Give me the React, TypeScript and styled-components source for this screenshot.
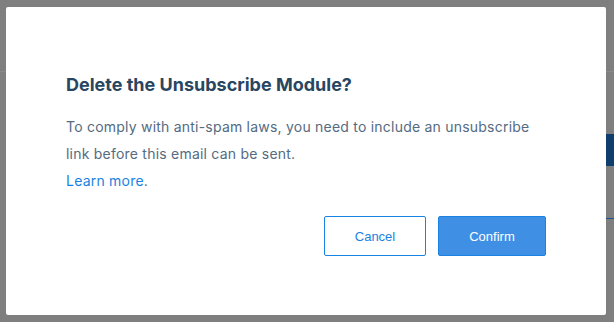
import React from "react";
import styled, { createGlobalStyle } from "styled-components";

const Global = createGlobalStyle`
  html, body { margin: 0; padding: 0; }
  body { background: #7f7f7f; width: 614px; height: 322px; overflow: hidden; }
`;

const Backdrop = styled.div`
  position: relative;
  width: 614px;
  height: 322px;
  background: #7f7f7f;
  padding: 7px 8px 7px 6px;
  box-sizing: border-box;
`;

const Stripe = styled.div<{ $top: number; $h: number; $color: string; $left?: number }>`
  position: absolute;
  top: ${(p) => p.$top}px;
  left: ${(p) => p.$left ?? 606}px;
  right: 0;
  height: ${(p) => p.$h}px;
  background: ${(p) => p.$color};
`;

const Modal = styled.div`
  position: relative;
  width: 600px;
  height: 308px;
  background: #fff;
  border-radius: 2px;
  box-sizing: border-box;
  padding: 66px 60px 0 60px;
  display: flex;
  flex-direction: column;
`;

const Title = styled.h2`
  margin: 0 0 16px;
  font-family: "Inter", "Liberation Sans", sans-serif;
  font-weight: 700;
  font-size: 18px;
  line-height: 24px;
  color: #294661;
  letter-spacing: 0;
`;

const Body = styled.p`
  margin: 0;
  font-family: "Inter", "Liberation Sans", sans-serif;
  font-size: 14px;
  line-height: 27px;
  color: #546b81;
  letter-spacing: 0.22px;
`;

const Link = styled.a`
  color: #1a82e2;
  text-decoration: none;
`;

const Actions = styled.div`
  display: flex;
  justify-content: flex-end;
  gap: 12px;
  margin-top: 22px;
`;

const Button = styled.button<{ $primary?: boolean }>`
  height: 40px;
  width: ${(p) => (p.$primary ? 108 : 102)}px;
  border-radius: 2px;
  border: 1px solid #1a82e2;
  background: ${(p) => (p.$primary ? "#3f8fe4" : "#fff")};
  color: ${(p) => (p.$primary ? "#fff" : "#1a82e2")};
  font-family: "Liberation Sans", Arial, sans-serif;
  font-size: 13px;
  cursor: pointer;
`;

export default function App() {
  return (
    <>
      <Global />
      <Backdrop>
        <Stripe $top={71} $h={1} $color="#8a8a8a" $left={0} />
        <Stripe $top={134} $h={32} $color="#0f3d6e" />
        <Stripe $top={218} $h={1} $color="#1a5596" />
        <Modal>
          <Title>Delete the Unsubscribe Module?</Title>
          <Body>
            To comply with anti-spam laws, you need to include an unsubscribe
            <br />
            link before this email can be sent.
            <br />
            <Link href="#">Learn more</Link>.
          </Body>
          <Actions>
            <Button>Cancel</Button>
            <Button $primary>Confirm</Button>
          </Actions>
        </Modal>
      </Backdrop>
    </>
  );
}
